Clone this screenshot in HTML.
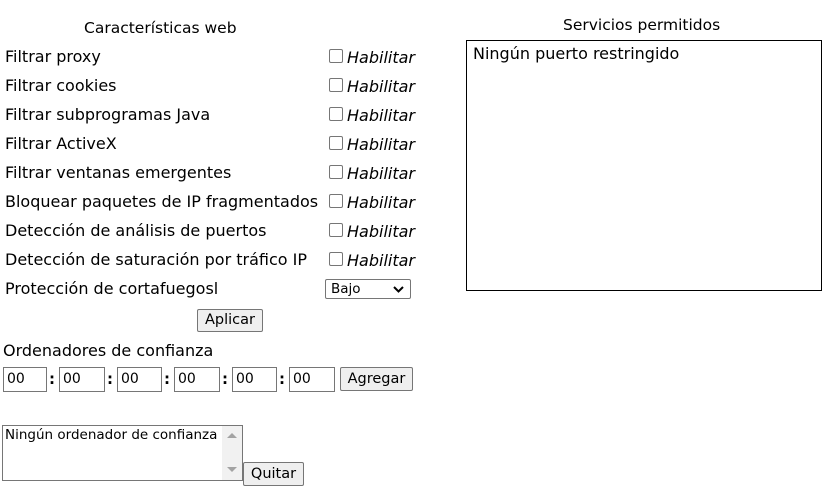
<!DOCTYPE html>
<html><head><meta charset="utf-8"><style>
body{margin:0;width:834px;height:496px;background:#fff;font-family:"DejaVu Sans",sans-serif;font-size:16px;color:#000;position:relative;overflow:hidden}
.a{position:absolute;white-space:nowrap}
.cb{position:absolute;width:12px;height:12px;border:1px solid #767676;border-radius:2px;background:#fff}
.hab{position:absolute;font-style:italic;font-size:16px}
.in{position:absolute;border:1px solid #767676;height:25px;box-sizing:border-box;font-size:14px;padding:3px 0 0 3px}
.btn{position:absolute;border:1px solid #767676;border-radius:2px;background:#efefef;box-sizing:border-box;font-size:14.5px;text-align:center}
.col{position:absolute;font-weight:bold;font-size:15px}
</style></head><body>
<div class="a" style="left:84px;top:19px;font-size:15.5px">Características web</div>
<div class="a" style="left:563px;top:16px;font-size:15.5px">Servicios permitidos</div>
<div style="position:absolute;left:466px;top:40px;width:354px;height:249px;border:1px solid #000"></div>
<div class="a" style="left:473px;top:44px">Ningún puerto restringido</div>

<div class="a" style="left:5px;top:47px">Filtrar proxy</div>
<div class="a" style="left:5px;top:76px">Filtrar cookies</div>
<div class="a" style="left:5px;top:105px">Filtrar subprogramas Java</div>
<div class="a" style="left:5px;top:134px">Filtrar ActiveX</div>
<div class="a" style="left:5px;top:163px">Filtrar ventanas emergentes</div>
<div class="a" style="left:5px;top:192px">Bloquear paquetes de IP fragmentados</div>
<div class="a" style="left:5px;top:221px">Detección de análisis de puertos</div>
<div class="a" style="left:5px;top:250px">Detección de saturación por tráfico IP</div>
<div class="a" style="left:5px;top:279px">Protección de cortafuegosl</div>

<div class="cb" style="left:329px;top:49px"></div><div class="hab" style="left:347px;top:48px">Habilitar</div>
<div class="cb" style="left:329px;top:78px"></div><div class="hab" style="left:347px;top:77px">Habilitar</div>
<div class="cb" style="left:329px;top:107px"></div><div class="hab" style="left:347px;top:106px">Habilitar</div>
<div class="cb" style="left:329px;top:136px"></div><div class="hab" style="left:347px;top:135px">Habilitar</div>
<div class="cb" style="left:329px;top:165px"></div><div class="hab" style="left:347px;top:164px">Habilitar</div>
<div class="cb" style="left:329px;top:194px"></div><div class="hab" style="left:347px;top:193px">Habilitar</div>
<div class="cb" style="left:329px;top:223px"></div><div class="hab" style="left:347px;top:222px">Habilitar</div>
<div class="cb" style="left:329px;top:252px"></div><div class="hab" style="left:347px;top:251px">Habilitar</div>

<div style="position:absolute;left:325px;top:279px;width:86px;height:20px;border:1px solid #767676;border-radius:2px;box-sizing:border-box;font-size:13.5px;padding:1px 0 0 5px">Bajo
<svg style="position:absolute;right:6px;top:6px" width="11" height="7" viewBox="0 0 11 7"><path d="M1 1L5.5 5.5L10 1" fill="none" stroke="#000" stroke-width="2"/></svg></div>

<div class="btn" style="left:197px;top:309px;width:66px;height:23px;padding-top:2px">Aplicar</div>
<div class="a" style="left:3px;top:341px;font-size:16px">Ordenadores de confianza</div>

<div class="in" style="left:3px;top:367px;width:44px">00</div><div class="col" style="left:49px;top:370px">:</div>
<div class="in" style="left:59px;top:367px;width:46px">00</div><div class="col" style="left:107px;top:370px">:</div>
<div class="in" style="left:117px;top:367px;width:45px">00</div><div class="col" style="left:164px;top:370px">:</div>
<div class="in" style="left:174px;top:367px;width:46px">00</div><div class="col" style="left:222px;top:370px">:</div>
<div class="in" style="left:232px;top:367px;width:45px">00</div><div class="col" style="left:279px;top:370px">:</div>
<div class="in" style="left:289px;top:367px;width:46px">00</div>
<div class="btn" style="left:340px;top:367px;width:73px;height:24px;padding-top:3px">Agregar</div>

<div style="position:absolute;left:2px;top:425px;width:241px;height:56px;border:1px solid #767676;box-sizing:border-box"></div>
<div style="position:absolute;left:222px;top:426px;width:20px;height:54px;background:#f1f1f1"></div>
<svg style="position:absolute;left:227px;top:432px" width="10" height="6"><path d="M0 6L5 1L10 6Z" fill="#a3a3a3"/></svg>
<svg style="position:absolute;left:227px;top:467px" width="10" height="6"><path d="M0 0L5 5L10 0Z" fill="#a3a3a3"/></svg>
<div class="a" style="left:5px;top:427px;font-size:13.5px">Ningún ordenador de confianza</div>
<div class="btn" style="left:243px;top:462px;width:61px;height:24px;padding-top:3px">Quitar</div>
</body></html>
